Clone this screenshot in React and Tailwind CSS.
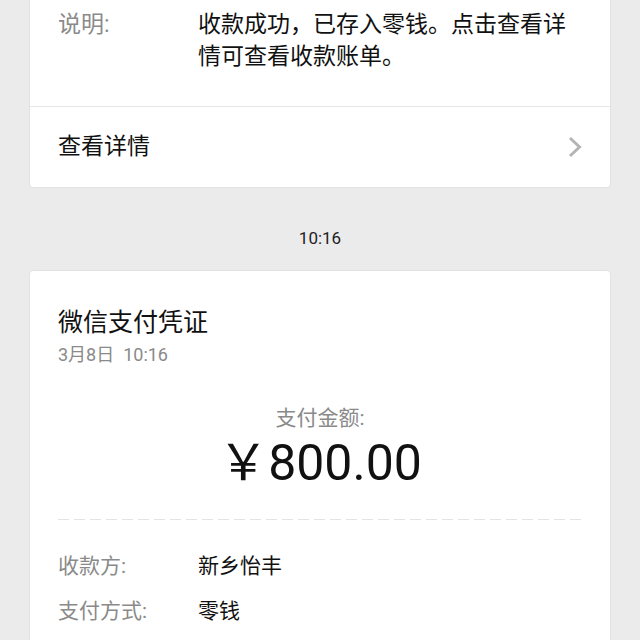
import React from "react";

export default function App() {
  return (
    <div className="w-[640px] h-[640px] overflow-hidden bg-[#ebebeb] font-['Roboto','Noto_Sans_CJK_SC',sans-serif]">
      <div className="mx-[29px] bg-white rounded-b-[4px] border border-t-0 border-[#e2e2e2]">
        <div className="flex pl-[28px] pr-[26px] pt-[9px] pb-[33px] text-[23px] leading-[32px]">
          <div className="w-[140px] shrink-0 text-[#8a8a8a]">说明:</div>
          <div className="text-[#111]">收款成功，已存入零钱。点击查看详情可查看收款账单。</div>
        </div>
        <div className="border-t border-[#e6e6e6] h-[81px] flex items-center justify-between pl-[28px] pr-[26px]">
          <div className="text-[23px] text-[#111]">查看详情</div>
          <svg width="16" height="24" viewBox="0 0 16 24" className="mr-[1px]">
            <path d="M3 3 L12.5 12 L3 21" fill="none" stroke="#b5b5b5" strokeWidth="3" />
          </svg>
        </div>
      </div>
      <div className="mt-[38px] mb-[20px] text-center text-[17px] leading-[24px] text-[#222]">10:16</div>
      <div className="mx-[29px] bg-white rounded-[4px] border border-[#e2e2e2] px-[28px] pt-[36px] h-[400px]">
        <div className="text-[25px] leading-[32px] text-[#111]">微信支付凭证</div>
        <div className="mt-[5px] text-[18px] leading-[22px] text-[#8a8a8a]">3月8日&nbsp;&nbsp;10:16</div>
        <div className="mt-[37px] text-center text-[21px] leading-[30px] text-[#8a8a8a]">支付金额:</div>
        <div className="mt-[2px] text-center text-[50px] leading-[56px] text-[#111]">￥800.00</div>
        <div className="mt-[28px] h-px bg-[repeating-linear-gradient(to_right,#e4e4e4_0px,#e4e4e4_11px,transparent_11px,transparent_16px)]" />
        <div className="mt-[31px] flex text-[21px] leading-[30px]">
          <div className="w-[140px] text-[#8a8a8a]">收款方:</div>
          <div className="text-[#111]">新乡怡丰</div>
        </div>
        <div className="mt-[15px] flex text-[21px] leading-[30px]">
          <div className="w-[140px] text-[#8a8a8a]">支付方式:</div>
          <div className="text-[#111]">零钱</div>
        </div>
      </div>
    </div>
  );
}
